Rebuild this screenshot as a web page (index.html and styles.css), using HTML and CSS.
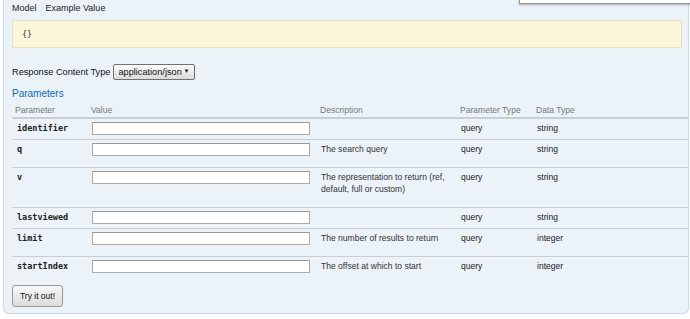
FILE: index.html
```html
<!DOCTYPE html>
<html lang="en">
<head>
  <meta charset="UTF-8">
  <meta name="viewport" content="width=device-width, initial-scale=1.0">
  <title>Operation</title>
  <link rel="stylesheet" href="styles.css">
</head>
<body>
  <div class="popup"></div>
  <div class="operation">
    <ul class="signature-tabs">
      <li>Model</li>
      <li>Example Value</li>
    </ul>
    <div class="sample">{}</div>

    <div class="content-type">
      <label for="content-type">Response Content Type</label>
      <span class="select-wrap">
        <select id="content-type">
          <option>application/json</option>
        </select>
      </span>
    </div>

    <h4 class="params-title">Parameters</h4>
    <table class="params">
      <colgroup>
        <col class="col-name">
        <col class="col-value">
        <col class="col-desc">
        <col class="col-type">
        <col>
      </colgroup>
      <thead>
        <tr>
          <th>Parameter</th>
          <th>Value</th>
          <th>Description</th>
          <th>Parameter Type</th>
          <th>Data Type</th>
        </tr>
      </thead>
      <tbody>
        <tr>
          <td class="code">identifier</td>
          <td><input type="text"></td>
          <td></td>
          <td>query</td>
          <td>string</td>
        </tr>
        <tr>
          <td class="code">q</td>
          <td><input type="text"></td>
          <td><p>The search query</p></td>
          <td>query</td>
          <td>string</td>
        </tr>
        <tr>
          <td class="code">v</td>
          <td><input type="text"></td>
          <td><p>The representation to return (ref, default, full or custom)</p></td>
          <td>query</td>
          <td>string</td>
        </tr>
        <tr>
          <td class="code">lastviewed</td>
          <td><input type="text"></td>
          <td></td>
          <td>query</td>
          <td>string</td>
        </tr>
        <tr>
          <td class="code">limit</td>
          <td><input type="text"></td>
          <td><p>The number of results to return</p></td>
          <td>query</td>
          <td>integer</td>
        </tr>
        <tr>
          <td class="code">startIndex</td>
          <td><input type="text"></td>
          <td><p>The offset at which to start</p></td>
          <td>query</td>
          <td>integer</td>
        </tr>
      </tbody>
    </table>

    <button class="submit">Try it out!</button>
  </div>
</body>
</html>
```

FILE: styles.css
```css
body {
  margin: 0;
  background-color: #fff;
  font-family: "Liberation Sans", Arial, sans-serif;
  color: #222;
}
.popup {
  position: absolute;
  left: 519px;
  top: -10px;
  width: 200px;
  height: 12px;
  background-color: #fff;
  border: 1px solid #999;
  box-shadow: 0 1px 2px rgba(0, 0, 0, 0.3);
}
.operation {
  width: 686px;
  margin-left: 3px;
  box-sizing: border-box;
  padding: 1px 0 6px 8px;
  background-color: #ebf3f9;
  border: 1px solid #c3d9ec;
  border-top: none;
  border-radius: 0 0 6px 6px;
}
.signature-tabs {
  display: flex;
  margin: 0 0 4px;
  padding: 0;
  list-style: none;
  font-size: 9px;
  line-height: 15px;
  color: #222;
}
.signature-tabs li {
  padding: 0 4px;
}
.signature-tabs li:first-child {
  padding-left: 0;
  border-right: 1px solid #dde6ee;
}
.sample {
  margin-right: 6px;
  padding: 8px 9px;
  background-color: #fcf6db;
  border: 1px solid #e5e0c6;
  font-family: "DejaVu Sans Mono", monospace;
  font-size: 8.5px;
  line-height: 10px;
  color: #333;
}
.content-type {
  display: flex;
  align-items: center;
  gap: 3px;
  margin-top: 16px;
  font-size: 9.2px;
  color: #111;
}
.select-wrap {
  position: relative;
  display: inline-block;
}
.select-wrap::after {
  content: "\25BC";
  position: absolute;
  right: 6px;
  top: 4px;
  font-size: 6px;
  color: #222;
  pointer-events: none;
}
.select-wrap select {
  -webkit-appearance: none;
  appearance: none;
  width: 82px;
  height: 16px;
  margin: 0;
  padding: 0 0 0 4px;
  border: 1px solid #707070;
  border-radius: 2px;
  background: linear-gradient(#fafafa, #dcdcdc);
  font-family: "Liberation Sans", Arial, sans-serif;
  font-size: 9.2px;
  color: #111;
}
.params-title {
  margin: 8px 0 0;
  font-size: 10px;
  line-height: 12px;
  font-weight: normal;
  color: #0f6ab4;
}
.params {
  width: 100%;
  margin-top: 0;
  border-collapse: collapse;
  table-layout: fixed;
  font-size: 8.55px;
}
.col-name {
  width: 76px;
}
.col-value {
  width: 229px;
}
.col-desc {
  width: 140px;
}
.col-type {
  width: 76px;
}
.params th {
  padding: 4px 0 1px 3px;
  text-align: left;
  font-weight: normal;
  line-height: 12px;
  color: #777;
  border-bottom: 2px solid #c8ced3;
}
.params td {
  padding: 3px 0 4px 4px;
  vertical-align: top;
  line-height: 12px;
  color: #222;
}
.params tbody tr {
  border-bottom: 1px solid #c8ced3;
}
.params tbody tr:last-child {
  border-bottom: none;
}
.params td p {
  margin: 0 0 8px;
  color: #333;
}
.params td.code {
  padding-left: 5px;
  font-family: "DejaVu Sans Mono", monospace;
  font-size: 8.5px;
  font-weight: bold;
  color: #222;
}
.params input {
  display: block;
  width: 218px;
  height: 13px;
  box-sizing: border-box;
  margin: 0;
  border: 1px solid #aaa;
  border-top-color: #999;
  background-color: #fff;
}
.submit {
  display: block;
  margin-top: 1px;
  width: 51px;
  height: 22px;
  padding: 0;
  border: 1px solid #999;
  border-radius: 3px;
  background: linear-gradient(#f8f8f8, #dcdcdc);
  font-family: "Liberation Sans", Arial, sans-serif;
  font-size: 8.5px;
  color: #111;
}
```
